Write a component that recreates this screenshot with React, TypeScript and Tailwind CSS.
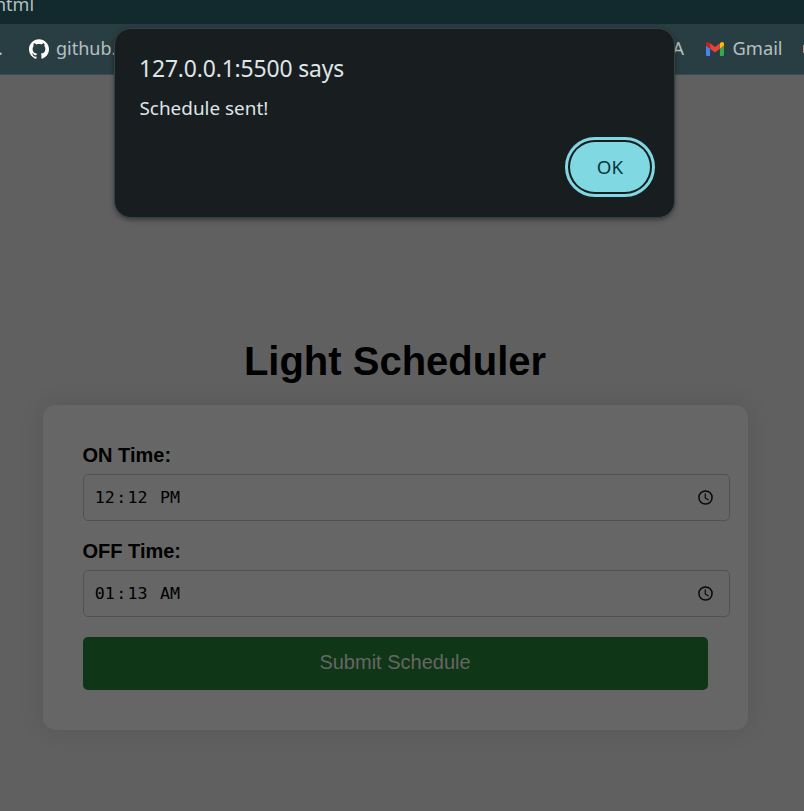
import { SiGithub } from "react-icons/si";

function ClockIcon() {
  return (
    <svg className="mb-px size-[17px] text-[#080808]" viewBox="0 0 17 17" fill="none" stroke="currentColor">
      <circle cx="8.5" cy="8.5" r="6.6" strokeWidth="1.5" />
      <path d="M8.3 4.5v4.4l3.2 2" strokeWidth="1.2" />
    </svg>
  );
}

function TimeField({ label, hour, minute, period }: { label: string; hour: string; minute: string; period: string }) {
  return (
    <div className="flex flex-col">
      <label className="-ml-[0.5px] h-[23px] text-[20px] leading-[23px] font-bold text-black">{label}</label>
      <div className="mt-[7px] flex h-[47px] w-[647px] items-center rounded-[5px] border border-[#515151] pr-[15px] pl-[9.6px]">
        <div className="flex flex-1 font-['DejaVu_Sans_Mono',monospace] text-[16.67px] leading-5 whitespace-pre text-black">
          <span className="px-[1.25px]">{hour}</span>
          <span>:</span>
          <span className="px-[1.25px]">{minute}</span>
          <span> </span>
          <span className="px-[1.25px]">{period}</span>
        </div>
        <ClockIcon />
      </div>
    </div>
  );
}

function GmailIcon() {
  return (
    <svg className="h-[14px] w-[18px] shrink-0" viewBox="52 42 88 66" preserveAspectRatio="none">
      <path fill="#4285f4" d="M58 108h14V74L52 59v43c0 3.32 2.69 6 6 6" />
      <path fill="#34a853" d="M120 108h14c3.32 0 6-2.69 6-6V59l-20 15" />
      <path fill="#fbbc04" d="M120 48v26l20-15v-8c0-7.42-8.47-11.65-14.4-7.2" />
      <path fill="#ea4335" d="M72 74V48l24 18 24-18v26L96 92" />
      <path fill="#c5221f" d="M52 51v8l20 15V48l-5.6-4.2c-5.94-4.45-14.4-.22-14.4 7.2" />
    </svg>
  );
}

export default function App() {
  return (
    <div className="relative flex h-[811px] w-[804px] flex-col overflow-hidden bg-[#606060] font-['Liberation_Sans',Arial,sans-serif]">
      <header className="font-['Noto_Sans',sans-serif] text-[18px] text-[#b6c0c2]">
        <div className="h-6 overflow-hidden bg-[#12292d]">
          <div className="-mt-2 -ml-[5px] leading-6">html</div>
        </div>
        <div className="flex h-[51px] items-center overflow-hidden border-b border-[#3b4d50] bg-[#293e42]">
          <span className="-ml-[2px] w-[31px] shrink-0 -translate-y-px">.</span>
          <SiGithub className="size-5 shrink-0 text-white" />
          <span className="ml-[7px] flex w-[628px] shrink-0 -translate-y-px justify-between">
            <span>github.</span>
            <span>A</span>
          </span>
          <span className="ml-[22px] shrink-0"><GmailIcon /></span>
          <span className="ml-[8.5px] w-[50px] shrink-0 -translate-y-px text-[18.3px]">Gmail</span>
          <span className="ml-5 h-2 w-2 shrink-0 bg-[#c98a90]" />
        </div>
      </header>

      <main className="flex flex-col pt-[263px] pl-[43px]">
        <h1 className="w-[704px] text-center text-[40px] leading-[46px] font-bold text-black">Light Scheduler</h1>
        <form className="mt-[21px] flex h-[325px] w-[705px] flex-col rounded-[12.5px] bg-[#666666] px-10 pt-[39px] shadow-[0_0_25px_rgba(0,0,0,0.1)]">
          <TimeField label="ON Time:" hour="12" minute="12" period="PM" />
          <div className="mt-[19px]">
            <TimeField label="OFF Time:" hour="01" minute="13" period="AM" />
          </div>
          <button type="button" className="mt-5 h-[53px] w-[625px] rounded-[5px] bg-[#0f3617] pr-px pb-[4px] text-[20px] text-[#666666]">
            Submit Schedule
          </button>
        </form>
      </main>

      <section role="dialog" className="absolute top-7 left-[114px] flex h-[190px] w-[561px] flex-col rounded-[17px] border border-[#354143] bg-[#181d1f] px-[24px] pt-[24px] font-['Noto_Sans',sans-serif] text-[#dfe5e7] shadow-[0_2px_5px_rgba(0,0,0,0.4)]">
        <h2 className="text-[22.9px] leading-8 tracking-[-0.15px]">127.0.0.1:5500 says</h2>
        <p className="mt-[11px] ml-[0.5px] text-[18.9px] leading-6">Schedule sent!</p>
        <button type="button" className="mt-[17px] -mr-[5px] flex h-[60px] w-[90px] items-center justify-center self-end rounded-full border-[3px] border-[#80d8e3] p-[2px]">
          <span className="flex size-full items-center justify-center rounded-full bg-[#80d8e3] pt-px text-[18.8px] text-[#07363d]">OK</span>
        </button>
      </section>
    </div>
  );
}
